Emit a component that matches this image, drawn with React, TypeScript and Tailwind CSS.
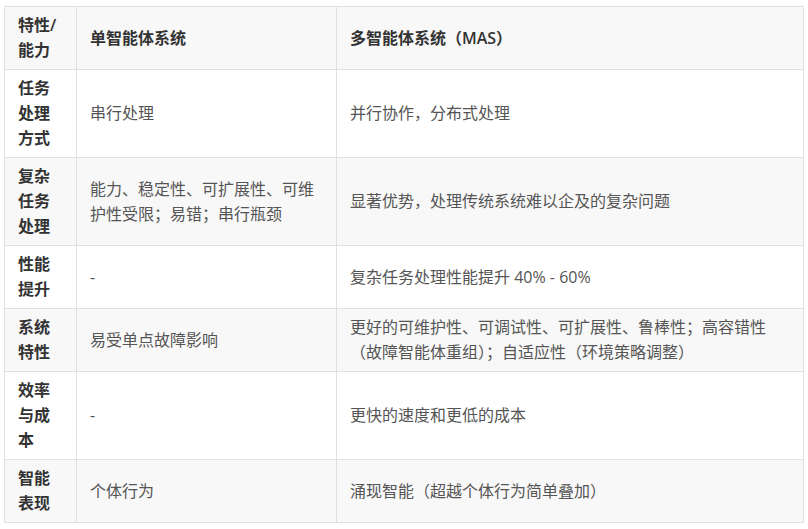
import React from "react";

const rows: { k: string; a: string; b: string }[] = [
  { k: "任务处理方式", a: "串行处理", b: "并行协作，分布式处理" },
  {
    k: "复杂任务处理",
    a: "能力、稳定性、可扩展性、可维护性受限；易错；串行瓶颈",
    b: "显著优势，处理传统系统难以企及的复杂问题",
  },
  { k: "性能提升", a: "-", b: "复杂任务处理性能提升 40% - 60%" },
  {
    k: "系统特性",
    a: "易受单点故障影响",
    b: "更好的可维护性、可调试性、可扩展性、鲁棒性；高容错性（故障智能体重组）；自适应性（环境策略调整）",
  },
  { k: "效率与成本", a: "-", b: "更快的速度和更低的成本" },
  { k: "智能表现", a: "个体行为", b: "涌现智能（超越个体行为简单叠加）" },
];

export default function App() {
  return (
    <div
      className="w-[808px] h-[529px] bg-white pt-[6px] pl-[4px]"
      style={{ fontFamily: '"Open Sans", "Noto Sans CJK SC", sans-serif' }}
    >
      <div className="grid grid-cols-[72px_260px_467px] w-[800px] border-l border-t border-[#dfe2e5] text-[16px] leading-[25px]">
        <div className="bg-[#f8f8f8] border-r border-b border-[#dfe2e5] px-[13px] py-[6px] flex items-center font-semibold text-[#333]">
          特性/能力
        </div>
        <div className="bg-[#f8f8f8] border-r border-b border-[#dfe2e5] px-[13px] py-[6px] flex items-center font-semibold text-[#333]">
          单智能体系统
        </div>
        <div className="bg-[#f8f8f8] border-r border-b border-[#dfe2e5] px-[13px] py-[6px] flex items-center font-semibold text-[#333]">
          多智能体系统（MAS）
        </div>
        {rows.map((r, i) => {
          const bg = i % 2 === 1 ? "bg-[#f8f8f8]" : "bg-white";
          return (
            <React.Fragment key={i}>
              <div className={`${bg} border-r border-b border-[#dfe2e5] px-[13px] py-[6px] flex items-center font-semibold text-[#333]`}>
                {r.k}
              </div>
              <div className={`${bg} border-r border-b border-[#dfe2e5] px-[13px] py-[6px] flex items-center text-[#555]`}>
                {r.a}
              </div>
              <div className={`${bg} border-r border-b border-[#dfe2e5] px-[13px] py-[6px] flex items-center text-[#555]`}>
                {r.b}
              </div>
            </React.Fragment>
          );
        })}
      </div>
    </div>
  );
}
